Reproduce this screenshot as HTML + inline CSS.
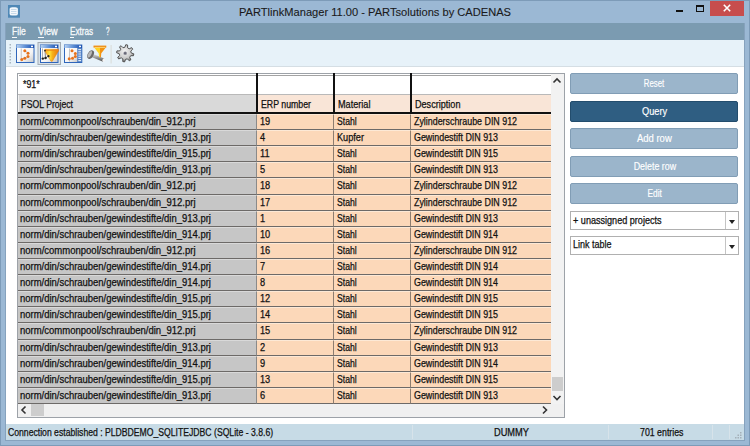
<!DOCTYPE html>
<html><head><meta charset="utf-8"><title>PARTlinkManager</title><style>*{margin:0;padding:0;box-sizing:border-box}
html,body{width:750px;height:446px;overflow:hidden;background:#9ab7d3;font-family:"Liberation Sans",sans-serif;position:relative}
div,span,i,b{position:absolute;display:block}
.tx{white-space:nowrap;line-height:1;-webkit-text-stroke:0.25px currentColor;font-family:"Liberation Sans",sans-serif}
#frame{left:0;top:0;width:750px;height:446px;border:1px solid #7d9bb8;background:#9bb8d4}
#innerline{left:5px;top:23px;width:739px;height:417px;border:1px solid #87a4bf}
#appicon{left:8px;top:5px;width:12px;height:13px;background:#4f88b6}
#appicon i{left:2px;top:2px;width:8px;height:9px;background:#f0f6fb;border-radius:2px}
#close{left:710px;top:1px;width:34px;height:15px;background:#c74d4d}
#menubar{left:5px;top:23px;width:739px;height:17px;background:#7b9bb1}
#toolbar{left:5px;top:40px;width:739px;height:27px;background:#e7f2f9;border-bottom:1px solid #d5dee4}
#content{left:5px;top:67px;width:739px;height:357px;background:#fff}
#grid{left:17px;top:73px;width:548px;height:345px;border:1px solid #9da2a8;background:#fff}
.row{left:0;width:551px}
.c{top:1px;bottom:0;border-bottom:1px solid #6d6a68;border-top:1px solid #e8e2da}
.c1{left:18px;width:239px;background:#c6c6c6;border-right:1px solid #8a8a8a;border-top-color:#d9d9d9}
.c2{left:257px;width:77px;background:#fcd8b9;border-right:1px solid #8d7d70;border-top-color:#fde9d6}
.c3{left:334px;width:77px;background:#fcd8b9;border-right:1px solid #8d7d70;border-top-color:#fde9d6}
.c4{left:411px;width:140px;background:#fcd8b9;border-top-color:#fde9d6}
#vscroll{left:551px;top:74px;width:13px;height:330px;background:#f2f2f2}
#hscroll{left:18px;top:404px;width:533px;height:13px;background:#f0f0f0}
#corner{left:551px;top:404px;width:13px;height:13px;background:#f0f0f0}
.btn{left:570px;width:168px;height:21px;border-radius:2px;background:#9bb5cb;border:1px solid #819db5}
#statusbar{left:5px;top:424px;width:739px;height:16px;background:#c7dbe6}
.dd{left:570px;width:169px;height:18.5px;background:#fff;border:1px solid #b0b0b0}
.dd i{right:0;top:0;width:13px;height:16.5px;border-left:1px solid #c4c4c4}
.dd b{right:3.5px;top:7.5px;width:0;height:0;border-left:3.5px solid transparent;border-right:3.5px solid transparent;border-top:4px solid #222}
</style></head>
<body>
<div id="frame"></div>

<svg style="position:absolute;left:0;top:0" width="24" height="20">
 <rect x="8" y="5" width="12" height="12.7" fill="#4f88b6"/>
 <rect x="9.6" y="7.2" width="8.3" height="8.3" rx="2.5" ry="1.5" fill="#f4f8fc"/>
 <g fill="#a9c6de"><rect x="11" y="9.2" width="5.5" height="0.6"/><rect x="11" y="11.2" width="5.5" height="0.6"/><rect x="11" y="13.2" width="5.5" height="0.6"/></g>
</svg>
<div id="close"></div>
<svg style="position:absolute;left:0;top:0" width="750" height="24">
 <path d="M723.8 4.8 L730.2 11.2 M730.2 4.8 L723.8 11.2" stroke="#fff" stroke-width="1.6"/>
 <rect x="676" y="10" width="7" height="2" fill="#111"/>
 <rect x="696.5" y="5.5" width="7" height="6" fill="none" stroke="#111" stroke-width="1"/>
 <rect x="696" y="5" width="8" height="2" fill="#111"/>
</svg>
<div id="menubar"></div>
<div style="left:12.2px;top:37px;width:4.8px;height:1px;background:#f6f9fb"></div>
<div style="left:38px;top:37px;width:6px;height:1px;background:#f6f9fb"></div>
<div style="left:69.6px;top:37px;width:4.6px;height:1px;background:#f6f9fb"></div>
<div id="toolbar"></div>
<div id="content"></div>
<svg style="position:absolute;left:0;top:0" width="150" height="70">
 <defs>
  <linearGradient id="tb" x1="0" x2="1" y1="0" y2="0"><stop offset="0" stop-color="#b9d3f2"/><stop offset="0.5" stop-color="#5d8fd6"/><stop offset="1" stop-color="#1c4fae"/></linearGradient>
  <linearGradient id="wi" x1="0" x2="1" y1="0" y2="1"><stop offset="0" stop-color="#ffffff"/><stop offset="0.6" stop-color="#f4f4f4"/><stop offset="1" stop-color="#c9c9c9"/></linearGradient>
  <linearGradient id="fun" x1="0" x2="1"><stop offset="0" stop-color="#f7a21c"/><stop offset="0.35" stop-color="#ffe23a"/><stop offset="0.55" stop-color="#f5b21a"/><stop offset="1" stop-color="#e9780e"/></linearGradient>
  <linearGradient id="scr" x1="0" x2="0" y1="0" y2="1"><stop offset="0" stop-color="#f2f2f2"/><stop offset="0.5" stop-color="#9a9a9a"/><stop offset="1" stop-color="#4a4a4a"/></linearGradient>
  <radialGradient id="gear" cx="0.45" cy="0.4" r="0.6"><stop offset="0" stop-color="#f4f4f4"/><stop offset="0.7" stop-color="#c8c8c8"/><stop offset="1" stop-color="#707070"/></radialGradient>
 </defs>
 <!-- grip -->
 <g fill="#a9b6c0">
  <rect x="9.5" y="44" width="1.5" height="1.5"/><rect x="9.5" y="47" width="1.5" height="1.5"/><rect x="9.5" y="50" width="1.5" height="1.5"/><rect x="9.5" y="53" width="1.5" height="1.5"/><rect x="9.5" y="56" width="1.5" height="1.5"/><rect x="9.5" y="59" width="1.5" height="1.5"/><rect x="9.5" y="62" width="1.5" height="1.5"/>
 </g>
 <!-- icon 1 -->
 <g>
  <rect x="16" y="44.5" width="18.5" height="18.5" fill="#2f66bb"/>
  <rect x="16.5" y="45" width="17.5" height="3" fill="url(#tb)"/>
  <rect x="31" y="45.7" width="2" height="1.5" fill="#fff"/>
  <rect x="17" y="48" width="16.5" height="14" fill="url(#wi)"/>
  <rect x="20.8" y="48.5" width="0.8" height="13" fill="#b8b8b8"/>
  <path d="M24.8 50.5 L28 53 M24.8 58 L28 56.5 M21.8 59 L24.8 58" stroke="#9db6d2" stroke-width="0.8"/>
  <g fill="#e8731c"><circle cx="24.8" cy="50.7" r="1.5"/><circle cx="28" cy="53.2" r="1.5"/><circle cx="28" cy="56.4" r="1.5"/><circle cx="24.8" cy="58.2" r="1.5"/><circle cx="21.8" cy="59.5" r="1.5"/></g>
 </g>
 <!-- icon 2 pressed -->
 <rect x="38" y="42.5" width="22.5" height="22" fill="#d8e2ea" stroke="#a3acb4" stroke-width="1"/>
 <g>
  <rect x="40" y="44.5" width="18.5" height="18.5" fill="#2f66bb"/>
  <rect x="40.5" y="45" width="17.5" height="3" fill="url(#tb)"/>
  <rect x="55" y="45.7" width="2" height="1.5" fill="#fff"/>
  <rect x="41" y="48" width="16.5" height="14" fill="url(#wi)"/>
  <rect x="42" y="48.5" width="0.8" height="10" fill="#a0a0a0"/>
  <path d="M42.5 58.5 L45.5 58 L48.5 56 M45 50.5 L45.5 58" stroke="#555" stroke-width="0.7" fill="none"/>
  <path d="M44.8 49.3 L58.5 49.3 L58.5 51 L52.3 61.3 L51 61.3 L44.8 51 Z" fill="url(#fun)" stroke="#e2780f" stroke-width="0.5"/><rect x="45.5" y="49.8" width="12.5" height="1" fill="#f08a16"/>
  <g fill="#222"><circle cx="42.8" cy="58.6" r="1.2"/><circle cx="45.6" cy="58" r="1.2"/><circle cx="48.5" cy="56.2" r="1.1"/><circle cx="45" cy="50.6" r="0.9"/></g>
 </g>
 <!-- icon 3 -->
 <g>
  <rect x="64" y="44.5" width="18.3" height="18.5" fill="#2f66bb"/>
  <rect x="64.5" y="45" width="17.3" height="3" fill="url(#tb)"/>
  <rect x="79" y="45.7" width="2" height="1.5" fill="#fff"/>
  <rect x="65" y="48" width="12.5" height="14" fill="url(#wi)"/>
  <rect x="77.6" y="48" width="4.2" height="14" fill="#4f7fc4"/>
  <g fill="#dfe9f5"><rect x="78.3" y="49" width="2.8" height="1.2"/><rect x="78.3" y="51.2" width="2.8" height="1.2"/><rect x="78.3" y="53.4" width="2.8" height="1.2"/><rect x="78.3" y="55.6" width="2.8" height="1.2"/><rect x="78.3" y="57.8" width="2.8" height="1.2"/><rect x="78.3" y="60" width="2.8" height="1.2"/></g>
  <rect x="69.2" y="48.5" width="0.8" height="13" fill="#b8b8b8"/>
  <g fill="#e8731c"><circle cx="72" cy="50.7" r="1.5"/><circle cx="75.3" cy="53.5" r="1.5"/><circle cx="75.3" cy="56.5" r="1.5"/><circle cx="72.5" cy="58.2" r="1.5"/><circle cx="69.2" cy="58.7" r="1.5"/></g>
 </g>
 <!-- icon 4 screw + funnel -->
 <g>
  <path d="M91.5 53.2 L104.2 58.6 L103 61.8 L90.3 56.4 Z" fill="url(#scr)"/>
  <ellipse cx="103.6" cy="60.2" rx="1.2" ry="1.7" transform="rotate(23 103.6 60.2)" fill="#f4f4f4"/>
  <ellipse cx="90.6" cy="54.6" rx="2.9" ry="4.6" transform="rotate(28 90.6 54.6)" fill="#6a6a6a"/>
  <ellipse cx="89.8" cy="54.2" rx="1.5" ry="3.6" transform="rotate(28 89.8 54.2)" fill="#b9b9b9"/>
  <path d="M94 47.3 L100 47.3 L100 57.3 L99.1 57.3 L98.7 53.3 Z" fill="#ffd324"/>
  <path d="M100 47.3 L106 47.3 L101.3 53.3 L100.9 57.3 L100 57.3 Z" fill="#f39312"/>
  <rect x="93.5" y="45.6" width="12.8" height="2" fill="#ef8a10"/>
  <rect x="94.5" y="46.9" width="10.8" height="0.7" fill="#ffef9a"/>
 </g>
 <!-- separator -->
 <rect x="110.6" y="45" width="1" height="18.5" fill="#d9dbd6"/>
 <!-- gear -->
 <g transform="translate(125.2 53.3) rotate(10)">
  <path d="M-1.40,-5.83 L-0.94,-8.55 L0.94,-8.55 L1.40,-5.83 L3.13,-5.12 L5.38,-6.71 L6.71,-5.38 L5.12,-3.13 L5.83,-1.40 L8.55,-0.94 L8.55,0.94 L5.83,1.40 L5.12,3.13 L6.71,5.38 L5.38,6.71 L3.13,5.12 L1.40,5.83 L0.94,8.55 L-0.94,8.55 L-1.40,5.83 L-3.13,5.12 L-5.38,6.71 L-6.71,5.38 L-5.12,3.13 L-5.83,1.40 L-8.55,0.94 L-8.55,-0.94 L-5.83,-1.40 L-5.12,-3.13 L-6.71,-5.38 L-5.38,-6.71 L-3.13,-5.12 Z" fill="url(#gear)" stroke="#4f4f4f" stroke-width="0.9"/>
  <circle cx="0" cy="0" r="1.8" fill="#8d8d98"/>
  <circle cx="-0.2" cy="-0.2" r="0.9" fill="#5a5a6c"/>
 </g>
</svg>

<div id="grid"></div>
<!-- filter row -->
<div style="left:18px;top:74px;width:533px;height:21px;background:#fff"></div>
<div style="left:19px;top:75px;width:532px;height:1px;background:#a3a3a3"></div>
<div style="left:18px;top:94px;width:533px;height:1px;background:#b9b9b9"></div>
<!-- header row -->
<div style="left:18px;top:95px;width:238px;height:18px;background:#d9d9d9;border-left:1px solid #f2f2f2"></div>
<div style="left:258px;top:95px;width:293px;height:18px;background:#f9e5d7"></div>
<div style="left:18px;top:112px;width:533px;height:1.5px;background:#111"></div>
<div style="left:255.5px;top:73px;width:2px;height:40px;background:#111"></div>
<div style="left:332.5px;top:73px;width:2px;height:40px;background:#111"></div>
<div style="left:409.5px;top:73px;width:2px;height:40px;background:#111"></div>
<div class="row" style="top:113px;height:17px"><div class="c c1"></div><div class="c c2"></div><div class="c c3"></div><div class="c c4"></div></div>
<div class="row" style="top:129px;height:17px"><div class="c c1"></div><div class="c c2"></div><div class="c c3"></div><div class="c c4"></div></div>
<div class="row" style="top:145px;height:17px"><div class="c c1"></div><div class="c c2"></div><div class="c c3"></div><div class="c c4"></div></div>
<div class="row" style="top:161px;height:17px"><div class="c c1"></div><div class="c c2"></div><div class="c c3"></div><div class="c c4"></div></div>
<div class="row" style="top:177px;height:18px"><div class="c c1"></div><div class="c c2"></div><div class="c c3"></div><div class="c c4"></div></div>
<div class="row" style="top:194px;height:17px"><div class="c c1"></div><div class="c c2"></div><div class="c c3"></div><div class="c c4"></div></div>
<div class="row" style="top:210px;height:17px"><div class="c c1"></div><div class="c c2"></div><div class="c c3"></div><div class="c c4"></div></div>
<div class="row" style="top:226px;height:17px"><div class="c c1"></div><div class="c c2"></div><div class="c c3"></div><div class="c c4"></div></div>
<div class="row" style="top:242px;height:17px"><div class="c c1"></div><div class="c c2"></div><div class="c c3"></div><div class="c c4"></div></div>
<div class="row" style="top:258px;height:17px"><div class="c c1"></div><div class="c c2"></div><div class="c c3"></div><div class="c c4"></div></div>
<div class="row" style="top:274px;height:17px"><div class="c c1"></div><div class="c c2"></div><div class="c c3"></div><div class="c c4"></div></div>
<div class="row" style="top:290px;height:17px"><div class="c c1"></div><div class="c c2"></div><div class="c c3"></div><div class="c c4"></div></div>
<div class="row" style="top:306px;height:17px"><div class="c c1"></div><div class="c c2"></div><div class="c c3"></div><div class="c c4"></div></div>
<div class="row" style="top:322px;height:18px"><div class="c c1"></div><div class="c c2"></div><div class="c c3"></div><div class="c c4"></div></div>
<div class="row" style="top:339px;height:17px"><div class="c c1"></div><div class="c c2"></div><div class="c c3"></div><div class="c c4"></div></div>
<div class="row" style="top:355px;height:17px"><div class="c c1"></div><div class="c c2"></div><div class="c c3"></div><div class="c c4"></div></div>
<div class="row" style="top:371px;height:17px"><div class="c c1"></div><div class="c c2"></div><div class="c c3"></div><div class="c c4"></div></div>
<div class="row" style="top:387px;height:17px"><div class="c c1"></div><div class="c c2"></div><div class="c c3"></div><div class="c c4"></div></div>
<div id="vscroll"></div>
<div id="hscroll"></div>
<div id="corner"></div>
<div style="left:552px;top:377px;width:11px;height:14px;background:#cdcdcd"></div>
<div style="left:31px;top:404px;width:13px;height:12px;background:#cdcdcd"></div>
<svg style="position:absolute;left:0;top:0" width="750" height="446">
 <path d="M553.5 82.5 L557 79 L560.5 82.5" fill="none" stroke="#333" stroke-width="1.6"/>
 <path d="M553.5 396 L557 399.5 L560.5 396" fill="none" stroke="#333" stroke-width="1.6"/>
 <path d="M25.5 406.5 L22 410 L25.5 413.5" fill="none" stroke="#333" stroke-width="1.6"/>
 <path d="M543 406.5 L546.5 410 L543 413.5" fill="none" stroke="#333" stroke-width="1.6"/>
</svg>
<div class="btn" style="top:73px"></div>
<div class="btn" style="top:100.7px;background:#2f5e82;border-color:#234d6d"></div>
<div class="btn" style="top:128px"></div>
<div class="btn" style="top:155.7px"></div>
<div class="btn" style="top:183.3px"></div>
<div class="dd" style="top:211px"><i></i><b></b></div>
<div class="dd" style="top:236px"><i></i><b></b></div>
<div id="statusbar"></div>
<div style="left:412px;top:425px;width:1px;height:14px;background:#d7e3ea"></div>
<div style="left:608px;top:425px;width:1px;height:14px;background:#d7e3ea"></div>
<div style="left:712px;top:425px;width:1px;height:14px;background:#d7e3ea"></div>
<div style="left:729px;top:425px;width:1px;height:14px;background:#d7e3ea"></div>
<svg style="position:absolute;left:733px;top:431px" width="11" height="10"><g fill="#a4b0b8"><rect x="7" y="1" width="1.5" height="1.5"/><rect x="4.5" y="3.5" width="1.5" height="1.5"/><rect x="7" y="3.5" width="1.5" height="1.5"/><rect x="2" y="6" width="1.5" height="1.5"/><rect x="4.5" y="6" width="1.5" height="1.5"/><rect x="7" y="6" width="1.5" height="1.5"/></g></svg>
<div style="left:5px;top:23px;width:740px;height:418px;border-right:1px solid #86a2bd;border-bottom:1px solid #86a2bd;border-left:1px solid #86a2bd"></div>
<span class="tx" style="left:20.3px;top:116.7px;font-size:10px;transform:scaleX(0.951);transform-origin:left top;color:#111;">norm/commonpool/schrauben/din_912.prj</span>
<span class="tx" style="left:259.9px;top:116.7px;font-size:10px;transform:scaleX(0.920);transform-origin:left top;color:#111;">19</span>
<span class="tx" style="left:336.7px;top:116.7px;font-size:10px;transform:scaleX(0.864);transform-origin:left top;color:#111;">Stahl</span>
<span class="tx" style="left:413.8px;top:116.7px;font-size:10px;transform:scaleX(0.887);transform-origin:left top;color:#111;">Zylinderschraube DIN 912</span>
<span class="tx" style="left:20.3px;top:132.7px;font-size:10px;transform:scaleX(0.946);transform-origin:left top;color:#111;">norm/din/schrauben/gewindestifte/din_913.prj</span>
<span class="tx" style="left:259.9px;top:132.7px;font-size:10px;transform:scaleX(0.920);transform-origin:left top;color:#111;">4</span>
<span class="tx" style="left:336.7px;top:132.7px;font-size:10px;transform:scaleX(0.916);transform-origin:left top;color:#111;">Kupfer</span>
<span class="tx" style="left:413.8px;top:132.7px;font-size:10px;transform:scaleX(0.889);transform-origin:left top;color:#111;">Gewindestift DIN 913</span>
<span class="tx" style="left:20.3px;top:148.7px;font-size:10px;transform:scaleX(0.946);transform-origin:left top;color:#111;">norm/din/schrauben/gewindestifte/din_915.prj</span>
<span class="tx" style="left:259.9px;top:148.7px;font-size:10px;transform:scaleX(0.920);transform-origin:left top;color:#111;">11</span>
<span class="tx" style="left:336.7px;top:148.7px;font-size:10px;transform:scaleX(0.864);transform-origin:left top;color:#111;">Stahl</span>
<span class="tx" style="left:413.8px;top:148.7px;font-size:10px;transform:scaleX(0.889);transform-origin:left top;color:#111;">Gewindestift DIN 915</span>
<span class="tx" style="left:20.3px;top:164.7px;font-size:10px;transform:scaleX(0.946);transform-origin:left top;color:#111;">norm/din/schrauben/gewindestifte/din_913.prj</span>
<span class="tx" style="left:259.9px;top:164.7px;font-size:10px;transform:scaleX(0.920);transform-origin:left top;color:#111;">5</span>
<span class="tx" style="left:336.7px;top:164.7px;font-size:10px;transform:scaleX(0.864);transform-origin:left top;color:#111;">Stahl</span>
<span class="tx" style="left:413.8px;top:164.7px;font-size:10px;transform:scaleX(0.889);transform-origin:left top;color:#111;">Gewindestift DIN 913</span>
<span class="tx" style="left:20.3px;top:180.7px;font-size:10px;transform:scaleX(0.951);transform-origin:left top;color:#111;">norm/commonpool/schrauben/din_912.prj</span>
<span class="tx" style="left:259.9px;top:180.7px;font-size:10px;transform:scaleX(0.920);transform-origin:left top;color:#111;">18</span>
<span class="tx" style="left:336.7px;top:180.7px;font-size:10px;transform:scaleX(0.864);transform-origin:left top;color:#111;">Stahl</span>
<span class="tx" style="left:413.8px;top:180.7px;font-size:10px;transform:scaleX(0.887);transform-origin:left top;color:#111;">Zylinderschraube DIN 912</span>
<span class="tx" style="left:20.3px;top:197.7px;font-size:10px;transform:scaleX(0.951);transform-origin:left top;color:#111;">norm/commonpool/schrauben/din_912.prj</span>
<span class="tx" style="left:259.9px;top:197.7px;font-size:10px;transform:scaleX(0.920);transform-origin:left top;color:#111;">17</span>
<span class="tx" style="left:336.7px;top:197.7px;font-size:10px;transform:scaleX(0.864);transform-origin:left top;color:#111;">Stahl</span>
<span class="tx" style="left:413.8px;top:197.7px;font-size:10px;transform:scaleX(0.887);transform-origin:left top;color:#111;">Zylinderschraube DIN 912</span>
<span class="tx" style="left:20.3px;top:213.7px;font-size:10px;transform:scaleX(0.946);transform-origin:left top;color:#111;">norm/din/schrauben/gewindestifte/din_913.prj</span>
<span class="tx" style="left:259.9px;top:213.7px;font-size:10px;transform:scaleX(0.920);transform-origin:left top;color:#111;">1</span>
<span class="tx" style="left:336.7px;top:213.7px;font-size:10px;transform:scaleX(0.864);transform-origin:left top;color:#111;">Stahl</span>
<span class="tx" style="left:413.8px;top:213.7px;font-size:10px;transform:scaleX(0.889);transform-origin:left top;color:#111;">Gewindestift DIN 913</span>
<span class="tx" style="left:20.3px;top:229.7px;font-size:10px;transform:scaleX(0.946);transform-origin:left top;color:#111;">norm/din/schrauben/gewindestifte/din_914.prj</span>
<span class="tx" style="left:259.9px;top:229.7px;font-size:10px;transform:scaleX(0.920);transform-origin:left top;color:#111;">10</span>
<span class="tx" style="left:336.7px;top:229.7px;font-size:10px;transform:scaleX(0.864);transform-origin:left top;color:#111;">Stahl</span>
<span class="tx" style="left:413.8px;top:229.7px;font-size:10px;transform:scaleX(0.889);transform-origin:left top;color:#111;">Gewindestift DIN 914</span>
<span class="tx" style="left:20.3px;top:245.7px;font-size:10px;transform:scaleX(0.951);transform-origin:left top;color:#111;">norm/commonpool/schrauben/din_912.prj</span>
<span class="tx" style="left:259.9px;top:245.7px;font-size:10px;transform:scaleX(0.920);transform-origin:left top;color:#111;">16</span>
<span class="tx" style="left:336.7px;top:245.7px;font-size:10px;transform:scaleX(0.864);transform-origin:left top;color:#111;">Stahl</span>
<span class="tx" style="left:413.8px;top:245.7px;font-size:10px;transform:scaleX(0.887);transform-origin:left top;color:#111;">Zylinderschraube DIN 912</span>
<span class="tx" style="left:20.3px;top:261.7px;font-size:10px;transform:scaleX(0.946);transform-origin:left top;color:#111;">norm/din/schrauben/gewindestifte/din_914.prj</span>
<span class="tx" style="left:259.9px;top:261.7px;font-size:10px;transform:scaleX(0.920);transform-origin:left top;color:#111;">7</span>
<span class="tx" style="left:336.7px;top:261.7px;font-size:10px;transform:scaleX(0.864);transform-origin:left top;color:#111;">Stahl</span>
<span class="tx" style="left:413.8px;top:261.7px;font-size:10px;transform:scaleX(0.889);transform-origin:left top;color:#111;">Gewindestift DIN 914</span>
<span class="tx" style="left:20.3px;top:277.7px;font-size:10px;transform:scaleX(0.946);transform-origin:left top;color:#111;">norm/din/schrauben/gewindestifte/din_914.prj</span>
<span class="tx" style="left:259.9px;top:277.7px;font-size:10px;transform:scaleX(0.920);transform-origin:left top;color:#111;">8</span>
<span class="tx" style="left:336.7px;top:277.7px;font-size:10px;transform:scaleX(0.864);transform-origin:left top;color:#111;">Stahl</span>
<span class="tx" style="left:413.8px;top:277.7px;font-size:10px;transform:scaleX(0.889);transform-origin:left top;color:#111;">Gewindestift DIN 914</span>
<span class="tx" style="left:20.3px;top:293.7px;font-size:10px;transform:scaleX(0.946);transform-origin:left top;color:#111;">norm/din/schrauben/gewindestifte/din_915.prj</span>
<span class="tx" style="left:259.9px;top:293.7px;font-size:10px;transform:scaleX(0.920);transform-origin:left top;color:#111;">12</span>
<span class="tx" style="left:336.7px;top:293.7px;font-size:10px;transform:scaleX(0.864);transform-origin:left top;color:#111;">Stahl</span>
<span class="tx" style="left:413.8px;top:293.7px;font-size:10px;transform:scaleX(0.889);transform-origin:left top;color:#111;">Gewindestift DIN 915</span>
<span class="tx" style="left:20.3px;top:309.7px;font-size:10px;transform:scaleX(0.946);transform-origin:left top;color:#111;">norm/din/schrauben/gewindestifte/din_915.prj</span>
<span class="tx" style="left:259.9px;top:309.7px;font-size:10px;transform:scaleX(0.920);transform-origin:left top;color:#111;">14</span>
<span class="tx" style="left:336.7px;top:309.7px;font-size:10px;transform:scaleX(0.864);transform-origin:left top;color:#111;">Stahl</span>
<span class="tx" style="left:413.8px;top:309.7px;font-size:10px;transform:scaleX(0.889);transform-origin:left top;color:#111;">Gewindestift DIN 915</span>
<span class="tx" style="left:20.3px;top:325.7px;font-size:10px;transform:scaleX(0.951);transform-origin:left top;color:#111;">norm/commonpool/schrauben/din_912.prj</span>
<span class="tx" style="left:259.9px;top:325.7px;font-size:10px;transform:scaleX(0.920);transform-origin:left top;color:#111;">15</span>
<span class="tx" style="left:336.7px;top:325.7px;font-size:10px;transform:scaleX(0.864);transform-origin:left top;color:#111;">Stahl</span>
<span class="tx" style="left:413.8px;top:325.7px;font-size:10px;transform:scaleX(0.887);transform-origin:left top;color:#111;">Zylinderschraube DIN 912</span>
<span class="tx" style="left:20.3px;top:342.7px;font-size:10px;transform:scaleX(0.946);transform-origin:left top;color:#111;">norm/din/schrauben/gewindestifte/din_913.prj</span>
<span class="tx" style="left:259.9px;top:342.7px;font-size:10px;transform:scaleX(0.920);transform-origin:left top;color:#111;">2</span>
<span class="tx" style="left:336.7px;top:342.7px;font-size:10px;transform:scaleX(0.864);transform-origin:left top;color:#111;">Stahl</span>
<span class="tx" style="left:413.8px;top:342.7px;font-size:10px;transform:scaleX(0.889);transform-origin:left top;color:#111;">Gewindestift DIN 913</span>
<span class="tx" style="left:20.3px;top:358.7px;font-size:10px;transform:scaleX(0.946);transform-origin:left top;color:#111;">norm/din/schrauben/gewindestifte/din_914.prj</span>
<span class="tx" style="left:259.9px;top:358.7px;font-size:10px;transform:scaleX(0.920);transform-origin:left top;color:#111;">9</span>
<span class="tx" style="left:336.7px;top:358.7px;font-size:10px;transform:scaleX(0.864);transform-origin:left top;color:#111;">Stahl</span>
<span class="tx" style="left:413.8px;top:358.7px;font-size:10px;transform:scaleX(0.889);transform-origin:left top;color:#111;">Gewindestift DIN 914</span>
<span class="tx" style="left:20.3px;top:374.7px;font-size:10px;transform:scaleX(0.946);transform-origin:left top;color:#111;">norm/din/schrauben/gewindestifte/din_915.prj</span>
<span class="tx" style="left:259.9px;top:374.7px;font-size:10px;transform:scaleX(0.920);transform-origin:left top;color:#111;">13</span>
<span class="tx" style="left:336.7px;top:374.7px;font-size:10px;transform:scaleX(0.864);transform-origin:left top;color:#111;">Stahl</span>
<span class="tx" style="left:413.8px;top:374.7px;font-size:10px;transform:scaleX(0.889);transform-origin:left top;color:#111;">Gewindestift DIN 915</span>
<span class="tx" style="left:20.3px;top:390.7px;font-size:10px;transform:scaleX(0.946);transform-origin:left top;color:#111;">norm/din/schrauben/gewindestifte/din_913.prj</span>
<span class="tx" style="left:259.9px;top:390.7px;font-size:10px;transform:scaleX(0.920);transform-origin:left top;color:#111;">6</span>
<span class="tx" style="left:336.7px;top:390.7px;font-size:10px;transform:scaleX(0.864);transform-origin:left top;color:#111;">Stahl</span>
<span class="tx" style="left:413.8px;top:390.7px;font-size:10px;transform:scaleX(0.889);transform-origin:left top;color:#111;">Gewindestift DIN 913</span>
<span class="tx" style="left:21.0px;top:100.2px;font-size:10px;transform:scaleX(0.864);transform-origin:left top;color:#111;">PSOL Project</span>
<span class="tx" style="left:261.0px;top:100.2px;font-size:10px;transform:scaleX(0.876);transform-origin:left top;color:#111;">ERP number</span>
<span class="tx" style="left:337.5px;top:100.2px;font-size:10px;transform:scaleX(0.913);transform-origin:left top;color:#111;">Material</span>
<span class="tx" style="left:414.5px;top:100.2px;font-size:10px;transform:scaleX(0.909);transform-origin:left top;color:#111;">Description</span>
<span class="tx" style="left:23.3px;top:79.5px;font-size:10px;transform:scaleX(0.883);transform-origin:left top;color:#111;">*91*</span>
<span class="tx" style="left:238.5px;top:5.5px;font-size:11.7px;transform:scaleX(0.951);transform-origin:left top;color:#1a1a1a;-webkit-text-stroke:0.1px #1a1a1a;">PARTlinkManager 11.00 - PARTsolutions by CADENAS</span>
<span class="tx" style="left:12.3px;top:25.9px;font-size:10.5px;transform:scaleX(0.816);transform-origin:left top;color:#f6f9fb;-webkit-text-stroke:0.3px currentColor;">File</span>
<span class="tx" style="left:38.3px;top:25.9px;font-size:10.5px;transform:scaleX(0.864);transform-origin:left top;color:#f6f9fb;-webkit-text-stroke:0.3px currentColor;">View</span>
<span class="tx" style="left:69.8px;top:25.9px;font-size:10.5px;transform:scaleX(0.779);transform-origin:left top;color:#f6f9fb;-webkit-text-stroke:0.3px currentColor;">Extras</span>
<span class="tx" style="left:105.5px;top:25.9px;font-size:10.5px;transform:scaleX(0.599);transform-origin:left top;color:#f6f9fb;-webkit-text-stroke:0.3px currentColor;">?</span>
<span class="tx" style="left:641.3px;top:79.0px;font-size:10px;transform:scaleX(0.781);transform-origin:center top;color:#ffffff;-webkit-text-stroke:0.15px currentColor;">Reset</span>
<span class="tx" style="left:640.8px;top:106.7px;font-size:10px;transform:scaleX(0.925);transform-origin:center top;color:#ffffff;-webkit-text-stroke:0.15px currentColor;">Query</span>
<span class="tx" style="left:636.1px;top:134.1px;font-size:10px;transform:scaleX(0.949);transform-origin:center top;color:#ffffff;-webkit-text-stroke:0.15px currentColor;">Add row</span>
<span class="tx" style="left:630.7px;top:161.7px;font-size:10px;transform:scaleX(0.889);transform-origin:center top;color:#ffffff;-webkit-text-stroke:0.15px currentColor;">Delete row</span>
<span class="tx" style="left:645.9px;top:189.3px;font-size:10px;transform:scaleX(0.836);transform-origin:center top;color:#ffffff;-webkit-text-stroke:0.15px currentColor;">Edit</span>
<span class="tx" style="left:573.0px;top:215.7px;font-size:10px;transform:scaleX(0.908);transform-origin:left top;color:#111;">+ unassigned projects</span>
<span class="tx" style="left:573.4px;top:239.7px;font-size:10px;transform:scaleX(0.897);transform-origin:left top;color:#111;">Link table</span>
<span class="tx" style="left:8.0px;top:427.5px;font-size:10px;transform:scaleX(0.864);transform-origin:left top;color:#111;">Connection established : PLDBDEMO_SQLITEJDBC (SQLite - 3.8.6)</span>
<span class="tx" style="left:493.5px;top:427.5px;font-size:10px;transform:scaleX(0.926);transform-origin:left top;color:#111;">DUMMY</span>
<span class="tx" style="left:640.0px;top:427.5px;font-size:10px;transform:scaleX(0.879);transform-origin:left top;color:#111;">701 entries</span>
</body></html>
